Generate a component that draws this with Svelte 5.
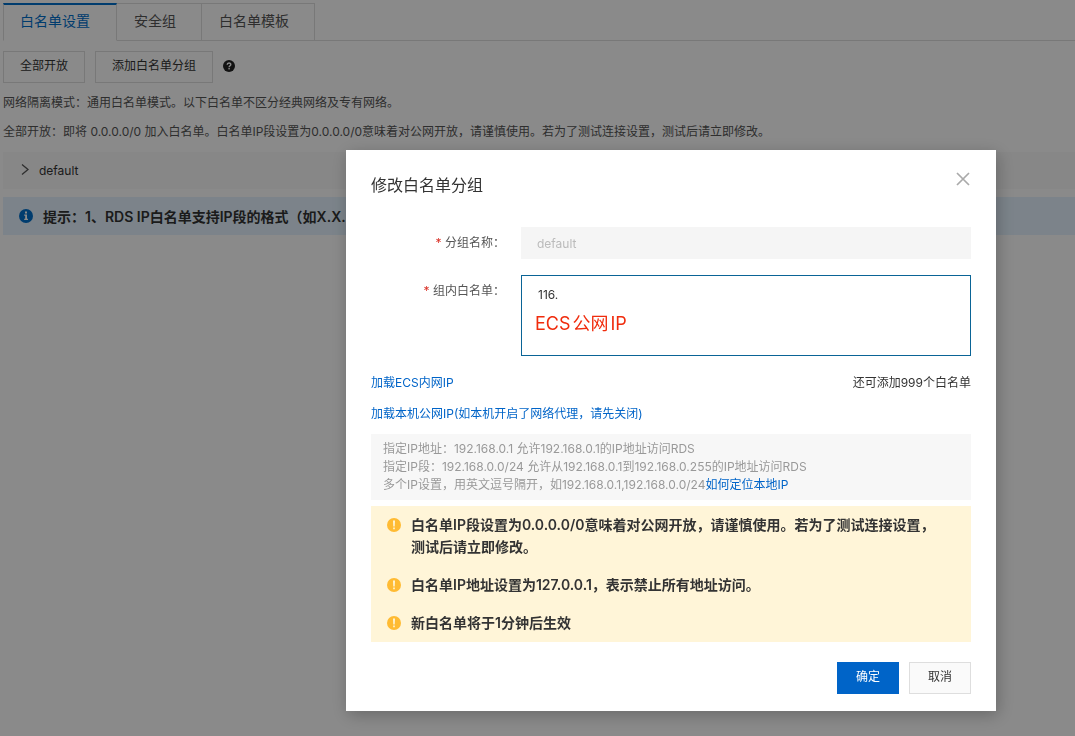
<script>
  let tab = $state(0);
  let groupName = $state("default");
  let ips = $state("116.");

  const tabs = ["白名单设置", "安全组", "白名单模板"];
  const warnings = [
    "白名单IP段设置为0.0.0.0/0意味着对公网开放，请谨慎使用。若为了测试连接设置，测试后请立即修改。",
    "白名单IP地址设置为127.0.0.1，表示禁止所有地址访问。",
    "新白名单将于1分钟后生效",
  ];
</script>

<main class="page">
  <div class="tabs" role="tablist">
    {#each tabs as t, i}
      <button class="tab" class:active={tab === i} role="tab" aria-selected={tab === i} onclick={() => (tab = i)}>{t}</button>
    {/each}
  </div>

  <div class="toolbar">
    <button class="btn">全部开放</button>
    <button class="btn">添加白名单分组</button>
    <svg class="help" width="12" height="12" viewBox="0 0 12 12" aria-hidden="true">
      <circle cx="6" cy="6" r="6" fill="#222" />
      <path d="M4.2 4.7C4.2 2.4 7.8 2.4 7.8 4.6 7.8 5.8 6.1 5.8 6.1 7.2" fill="none" stroke="#fff" stroke-width="1.4" />
      <rect x="5.4" y="8" width="1.4" height="1.4" fill="#fff" />
    </svg>
  </div>

  <div class="notes">
    <p>网络隔离模式：通用白名单模式。以下白名单不区分经典网络及专有网络。</p>
    <p>全部开放：即将 0.0.0.0/0 加入白名单。白名单IP段设置为0.0.0.0/0意味着对公网开放，请谨慎使用。若为了测试连接设置，测试后请立即修改。</p>
  </div>

  <button class="group">
    <svg width="8" height="14" viewBox="0 0 8 14" aria-hidden="true">
      <path d="M1 0.5L7 5.5L1 10.5" fill="none" stroke="#555" stroke-width="1.3" />
    </svg>
    default
  </button>

  <div class="tip">
    <svg width="14" height="14" viewBox="0 0 14 14" aria-hidden="true">
      <circle cx="7" cy="7" r="7" fill="#0070cc" />
      <path d="M6 2.6H8V4.4H6ZM5.2 5.6H8V9.8H9V11H5.2V9.8H6.2V6.8H5.2Z" fill="#fff" />
    </svg>
    <strong>提示：1、RDS IP白名单支持IP段的格式（如X.X.</strong>
  </div>
</main>

<div class="mask">
  <div class="dialog" role="dialog" aria-modal="true" aria-labelledby="dlg-title">
    <header class="head">
      <h2 id="dlg-title">修改白名单分组</h2>
      <button class="close" aria-label="关闭">
        <svg width="14" height="14" viewBox="0 0 14 14" aria-hidden="true">
          <path d="M1 1L13 13M13 1L1 13" stroke="#aaa" stroke-width="1.7" />
        </svg>
      </button>
    </header>

    <div class="field">
      <label for="group-name"><i>*</i> 分组名称：</label>
      <input id="group-name" type="text" bind:value={groupName} disabled />
    </div>
    <div class="field">
      <label for="group-ips"><i>*</i> 组内白名单：</label>
      <div class="area">
        <textarea id="group-ips" bind:value={ips}></textarea>
        <span class="mark"><span>ECS</span><span>公网</span><span>IP</span></span>
      </div>
    </div>

    <div class="loads">
      <a href="#ecs">加载ECS内网IP</a>
      <span>还可添加999个白名单</span>
    </div>
    <div class="loads">
      <a href="#local">加载本机公网IP(如本机开启了网络代理，请先关闭)</a>
    </div>

    <div class="hint">
      指定IP地址：192.168.0.1 允许192.168.0.1的IP地址访问RDS<br />
      指定IP段：192.168.0.0/24 允许从192.168.0.1到192.168.0.255的IP地址访问RDS<br />
      多个IP设置，用英文逗号隔开，如192.168.0.1,192.168.0.0/24<a href="#locate">如何定位本地IP</a>
    </div>

    <ul class="warn">
      {#each warnings as w}
        <li>
          <svg width="14" height="14" viewBox="0 0 14 14" aria-hidden="true">
            <circle cx="7" cy="7" r="7" fill="#ffbb33" />
            <path d="M6 2.6H8L7.7 8.4H6.3ZM6.2 9.6H7.8V11.2H6.2Z" fill="#fff6d9" />
          </svg>
          <span>{w}</span>
        </li>
      {/each}
    </ul>

    <footer class="foot">
      <button class="btn primary">确定</button>
      <button class="btn">取消</button>
    </footer>
  </div>
</div>

<style>
  :global(body) { background: #fff; }
  .page, .mask, button, input, textarea { font-family: Inter, "Noto Sans CJK SC", sans-serif; font-size: 12px; color: #333; }
  .page, .dialog, .page *, .dialog * { box-sizing: border-box; }
  button { cursor: pointer; }
  a { color: #0064c8; text-decoration: none; }
  svg { flex: none; display: block; }

  .page { min-height: 100vh; padding: 3px 0 0 3px; }
  .tabs { display: flex; height: 38px; border-bottom: 1px solid #dedede; }
  .tab { height: 38px; padding: 0 25px 2px 17px; border: 1px solid #dedede; border-left: 0; background: #fff; font-size: 14px; line-height: 34px; color: #555; }
  .tab.active { padding: 0 26px 3px 16px; border-top: 2px solid #0070cc; border-left: 1px solid #dedede; border-bottom-color: #fff; line-height: 32px; color: #0070cc; }

  .toolbar { display: flex; align-items: center; gap: 10px; margin-top: 10px; }
  .btn { height: 32px; padding: 0 16px 2px; border: 1px solid #dedede; background: #fafafa; line-height: 28px; white-space: nowrap; }
  .page .btn { background: #fff; }
  .help { margin-bottom: 2px; }
  .notes { display: flex; flex-direction: column; gap: 9px; margin-top: 10px; line-height: 20px; color: #555; }
  .notes p { margin: 0; }

  .group { display: flex; align-items: center; gap: 10px; width: 100%; height: 37px; margin-top: 10px; padding: 0 18px; border: 0; background: #fafafa; text-align: left; }
  .tip { display: flex; align-items: center; gap: 10px; height: 38px; margin-top: 8px; padding: 0 16px; background: #e5f3ff; font-size: 14px; overflow: hidden; white-space: nowrap; }
  .tip strong { font-weight: 600; }

  .mask { position: fixed; inset: 0; display: flex; justify-content: flex-end; align-items: flex-start; padding: 150px 79px 0 16px; background: rgba(0, 0, 0, .46); overflow: auto; }
  .dialog { width: 100%; max-width: 650px; padding: 25px 25px 17px; background: #fff; box-shadow: 2px 4px 16px rgba(0, 0, 0, .25); }
  .head { display: flex; justify-content: space-between; height: 52px; }
  .head h2 { margin: 0; font-size: 16px; font-weight: 400; line-height: 20px; }
  .close { width: 16px; height: 16px; padding: 0; border: 0; background: none; display: flex; align-items: center; justify-content: center; margin-top: -4px; }

  .field { display: flex; gap: 16px; margin-bottom: 16px; }
  .field label { flex: 0 0 134px; text-align: right; line-height: 32px; color: #555; }
  .field label i { color: #d93026; font-style: normal; }
  .field input { flex: 1; min-width: 0; height: 32px; padding: 0 16px; border: 0; background: #f5f5f5; color: #bbb; }
  .area { position: relative; flex: 1; }
  textarea { display: block; width: 100%; height: 81px; padding: 10px 16px; border: 1px solid #0a6496; border-radius: 0; background: #fff; line-height: 18px; resize: none; outline: none; }
  .mark { position: absolute; left: 14px; top: 36px; display: flex; gap: 2px; font-size: 18px; line-height: 26px; color: #f02c0d; pointer-events: none; }

  .loads { display: flex; justify-content: space-between; line-height: 22px; margin-bottom: 9px; }
  .hint { padding: 6px 12px; background: #f7f7f7; line-height: 18px; color: #999; }
  .warn { list-style: none; margin: 6px 0 0; padding: 8px 32px 8px 16px; background: #fff5d8; display: flex; flex-direction: column; gap: 16px; }
  .warn li { display: flex; gap: 10px; font-size: 14px; font-weight: 600; line-height: 22px; }
  .warn svg { margin-top: 4px; }
  .foot { display: flex; justify-content: flex-end; gap: 10px; margin-top: 20px; }
  .foot .btn { width: 62px; }
  .primary { background: #0064c8; border-color: #0064c8; color: #fff; }
</style>
